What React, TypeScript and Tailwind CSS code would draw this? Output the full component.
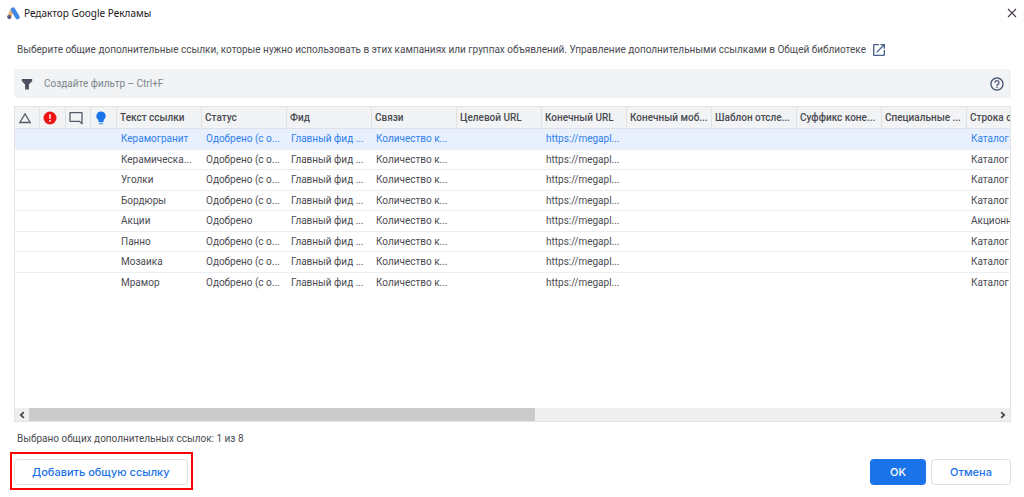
import type { ReactNode } from 'react';

type Link = { text: string; status: string; description: string };

const APPROVED_LIMITED = 'Одобрено (с о...';

const links: Link[] = [
  { text: 'Керамогранит', status: APPROVED_LIMITED, description: 'Каталог' },
  { text: 'Керамическа...', status: APPROVED_LIMITED, description: 'Каталог' },
  { text: 'Уголки', status: APPROVED_LIMITED, description: 'Каталог' },
  { text: 'Бордюры', status: APPROVED_LIMITED, description: 'Каталог' },
  { text: 'Акции', status: 'Одобрено', description: 'Акционн' },
  { text: 'Панно', status: APPROVED_LIMITED, description: 'Каталог' },
  { text: 'Мозаика', status: APPROVED_LIMITED, description: 'Каталог' },
  { text: 'Мрамор', status: APPROVED_LIMITED, description: 'Каталог' },
];

const headers = [
  'Текст ссылки',
  'Статус',
  'Фид',
  'Связи',
  'Целевой URL',
  'Конечный URL',
  'Конечный моб...',
  'Шаблон отсле...',
  'Суффикс коне...',
  'Специальные ...',
  'Строка о',
];

function AdsLogo() {
  return (
    <svg viewBox="0 0 24 24" className="size-[13px]" aria-hidden="true">
      <path d="M9.6 5.5 4.2 17.6" stroke="#e3b071" strokeWidth="7" strokeLinecap="round" />
      <path d="M11.2 4.8 19.3 18.6" stroke="#3f86ea" strokeWidth="8" strokeLinecap="round" />
      <circle cx="4.3" cy="18.6" r="3.9" fill="#5a5f86" />
    </svg>
  );
}

function FilterIcon() {
  return (
    <svg viewBox="0 0 12 12" className="size-3" fill="#4f4f61" aria-hidden="true">
      <path d="M.8 1h10.4v2L7.9 6.6v4.800H4.100V6.600L.8 3z" />
    </svg>
  );
}

function HelpIcon() {
  return (
    <svg viewBox="0 0 24 24" className="size-4" fill="#4c5775" aria-hidden="true">
      <path d="M11 18h2v-2h-2v2zm1-16C6.48 2 2 6.48 2 12s4.48 10 10 10 10-4.48 10-10S17.52 2 12 2zm0 18c-4.41 0-8-3.59-8-8s3.59-8 8-8 8 3.59 8 8-3.59 8-8 8zm0-14c-2.21 0-4 1.79-4 4h2c0-1.1.9-2 2-2s2 .9 2 2c0 2-3 1.75-3 5h2c0-2.25 3-2.5 3-5 0-2.21-1.79-4-4-4z" />
    </svg>
  );
}

function OpenIcon() {
  return (
    <svg viewBox="0 0 24 24" className="size-4" fill="#4a5f8f" aria-hidden="true">
      <path d="M19 19H5V5h7V3H5c-1.11 0-2 .9-2 2v14c0 1.1.89 2 2 2h14c1.1 0 2-.9 2-2v-7h-2v7zM14 3v2h3.59l-9.83 9.83 1.41 1.41L19 6.41V10h2V3h-7z" />
    </svg>
  );
}

function HeaderIcon({ label, children }: { label: string; children: ReactNode }) {
  return (
    <th className="border-r border-b border-[#dfe1e4] py-0 pr-0 pl-[2px]" aria-label={label}>
      <svg viewBox="0 0 16 16" className="size-4" aria-hidden="true">
        {children}
      </svg>
    </th>
  );
}

function Cell({ children }: { children?: ReactNode }) {
  return (
    <td className="overflow-hidden border-b border-[#eceef0] py-0 pr-0 pl-1 group-last:border-b-0">{children}</td>
  );
}

export default function App() {
  return (
    <main className="flex min-h-screen flex-col bg-white font-[Roboto,'Noto_Sans',sans-serif] text-[10px] leading-4 text-[#4b4b52]">
      <header className="flex h-[26px] items-center justify-between px-[7px]">
        <h1 className="flex items-center gap-1 font-['Noto_Sans',sans-serif] text-[#1d1622]">
          <AdsLogo />
          Редактор Google Рекламы
        </h1>
        <button type="button" aria-label="Закрыть">
          <svg viewBox="0 0 10 10" className="size-[10px]" fill="none" stroke="#4b3c49" strokeWidth="1.1" aria-hidden="true">
            <path d="M1 1l8 8M9 1 1 9" />
          </svg>
        </button>
      </header>

      <div className="flex flex-1 flex-col pr-[13px] pl-[14px]">
        <div className="mt-4 flex h-4 items-center gap-[5px] pl-[3px]">
          <p>
            Выберите общие дополнительные ссылки, которые нужно использовать в этих кампаниях или группах
            объявлений. Управление дополнительными ссылками в Общей библиотеке
          </p>
          <a href="#library" aria-label="Открыть общую библиотеку">
            <OpenIcon />
          </a>
        </div>

        <div className="mt-[11px] flex h-[29px] items-center rounded bg-[#f1f3f4] pr-[6px] pl-[7px]">
          <FilterIcon />
          <input
            type="text"
            aria-label="Фильтр"
            placeholder="Создайте фильтр – Ctrl+F"
            className="ml-[11px] min-w-0 flex-1 bg-transparent outline-none placeholder:text-[#7b858d]"
          />
          <button type="button" aria-label="Справка">
            <HelpIcon />
          </button>
        </div>

        <section className="mt-2 flex flex-1 flex-col overflow-hidden border border-[#e2e4e6]">
          <div className="flex-1 overflow-hidden">
            <table className="w-[1037px] table-fixed border-separate border-spacing-0 text-left whitespace-nowrap">
              <colgroup>
                <col className="w-[25px]" />
                <col className="w-[26px]" />
                <col className="w-[25px]" />
                <col className="w-[26px]" />
                {headers.map((h) => (
                  <col key={h} className="w-[85px]" />
                ))}
              </colgroup>
              <thead>
                <tr className="h-[22px] bg-[#f1f3f4]">
                  <HeaderIcon label="Изменения">
                    <path d="M8 3.900 13.200 12.500H2.800z" fill="none" stroke="#5a5a68" strokeWidth="1.300" />
                  </HeaderIcon>
                  <HeaderIcon label="Ошибки">
                    <circle cx="8" cy="8" r="6.5" fill="#ee1515" />
                    <path d="M8 4.300v4.400M8 10v1.800" stroke="#fff" strokeWidth="1.400" />
                  </HeaderIcon>
                  <HeaderIcon label="Комментарии">
                    <path d="M2 2.700h12v11l-2.600-2.400H2z" fill="none" stroke="#5a5a68" strokeWidth="1.300" strokeLinejoin="round" />
                  </HeaderIcon>
                  <HeaderIcon label="Рекомендации">
                    <path d="M8 1.500a4.600 4.600 0 0 0-2.600 8.400V12h5.200V9.900A4.600 4.600 0 0 0 8 1.500z" fill="#1a73e8" />
                    <path d="M6 12.700h4v1.700H6z" fill="#6aa5f2" />
                  </HeaderIcon>
                  {headers.map((h) => (
                    <th
                      key={h}
                      className="overflow-hidden border-r border-b border-[#dfe1e4] py-0 pr-0 pl-[3px] font-medium"
                    >
                      {h}
                    </th>
                  ))}
                </tr>
              </thead>
              <tbody>
                {links.map((link, i) => (
                  <tr
                    key={link.text}
                    aria-selected={i === 0}
                    className="group odd:h-[21px] even:h-5 aria-selected:bg-[#e8f0fe] aria-selected:text-[#2f80ea]"
                  >
                    <td colSpan={4} className="border-b border-[#eceef0] p-0 group-last:border-b-0" />
                    <Cell>{link.text}</Cell>
                    <Cell>{link.status}</Cell>
                    <Cell>Главный фид ...</Cell>
                    <Cell>Количество к...</Cell>
                    <Cell />
                    <Cell>https://megapl...</Cell>
                    <Cell />
                    <Cell />
                    <Cell />
                    <Cell />
                    <Cell>{link.description}</Cell>
                  </tr>
                ))}
              </tbody>
            </table>
          </div>
          <div className="flex h-[13px] items-center bg-[#efefef]">
            <button type="button" aria-label="Прокрутить влево" className="flex w-[14px] justify-center">
              <svg viewBox="0 0 6 8" className="h-2 w-[6px]" fill="none" stroke="#4b4650" strokeWidth="1.800" aria-hidden="true">
                <path d="M4.800 1.200 1.800 4l3 2.800" />
              </svg>
            </button>
            <div className="h-full flex-1">
              <div className="h-full w-[52.3%] bg-[#cbcbcb]" />
            </div>
            <button type="button" aria-label="Прокрутить вправо" className="flex w-[14px] justify-center">
              <svg viewBox="0 0 6 8" className="h-2 w-[6px]" fill="none" stroke="#4b4650" strokeWidth="1.800" aria-hidden="true">
                <path d="M1.200 1.200 4.200 4l-3 2.800" />
              </svg>
            </button>
          </div>
        </section>

        <p className="mt-[9px] pl-[3px]">Выбрано общих дополнительных ссылок: 1 из 8</p>

        <footer className="mt-3 mb-3 flex h-[26px] items-stretch gap-[5px] font-[Inter,'Noto_Sans',sans-serif] text-[11px] font-medium">
          <div className="relative mr-auto flex">
            <button type="button" className="rounded border border-[#dfe1e5] px-[17px] text-[#1a73e8]">
              Добавить общую ссылку
            </button>
            <span className="pointer-events-none absolute -top-[7px] -right-[5px] -bottom-[5px] -left-1 border-2 border-[#fb0505]" />
          </div>
          <button type="button" className="w-14 rounded bg-[#1a73e8] text-white">
            OK
          </button>
          <button type="button" className="w-20 rounded border border-[#dfe1e5] text-[#1a73e8]">
            Отмена
          </button>
        </footer>
      </div>
    </main>
  );
}
